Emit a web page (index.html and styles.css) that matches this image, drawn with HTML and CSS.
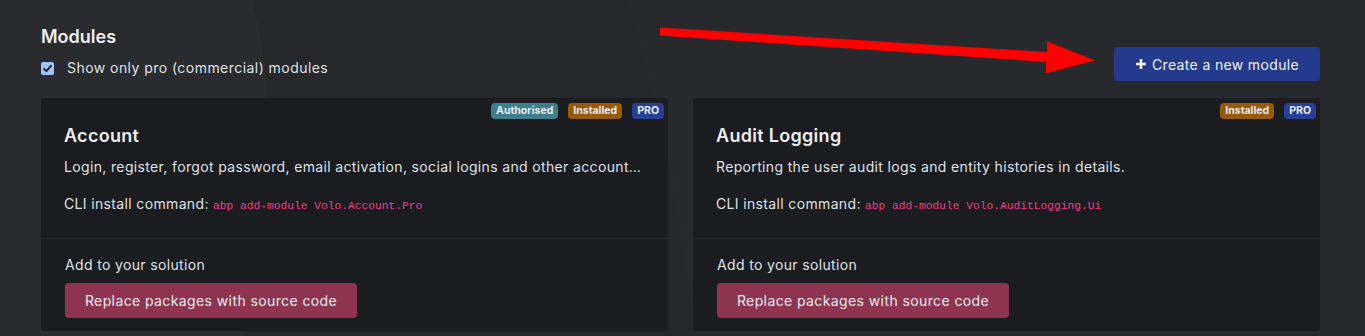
FILE: index.html
```html
<!DOCTYPE html>
<html lang="en">
<head>
<meta charset="utf-8">
<title>Modules</title>
<link rel="stylesheet" href="styles.css">
</head>
<body>
<div class="page">
  <div class="header">
    <div class="header-left">
      <h2 class="title">Modules</h2>
      <label class="check-row">
        <span class="checkbox"><svg width="13" height="13" viewBox="0 0 13 13"><path d="M3 6.8 L5.4 9.2 L10 3.8" fill="none" stroke="#1c1d20" stroke-width="1.8" stroke-linecap="round" stroke-linejoin="round"/></svg></span>
        <span>Show only pro (commercial) modules</span>
      </label>
    </div>
    <button class="btn-create"><svg width="12" height="12" viewBox="0 0 12 12"><path d="M6 1 V11 M1 6 H11" stroke="#f1f3f8" stroke-width="2.6"/></svg>Create a new module</button>
  </div>

  <div class="cards">
    <div class="card">
      <div class="badges">
        <span class="badge badge-auth">Authorised</span>
        <span class="badge badge-installed">Installed</span>
        <span class="badge badge-pro">PRO</span>
      </div>
      <div class="card-body">
        <h3 class="card-title">Account</h3>
        <p class="desc">Login, register, forgot password, email activation, social logins and other account related pages and functionalities.</p>
        <p class="cli">CLI install command: <code>abp add-module Volo.Account.Pro</code></p>
      </div>
      <div class="card-footer">
        <p class="add">Add to your solution</p>
        <button class="btn-replace">Replace packages with source code</button>
      </div>
    </div>

    <div class="card">
      <div class="badges">
        <span class="badge badge-installed">Installed</span>
        <span class="badge badge-pro">PRO</span>
      </div>
      <div class="card-body">
        <h3 class="card-title">Audit Logging</h3>
        <p class="desc">Reporting the user audit logs and entity histories in details.</p>
        <p class="cli">CLI install command: <code>abp add-module Volo.AuditLogging.Ui</code></p>
      </div>
      <div class="card-footer">
        <p class="add">Add to your solution</p>
        <button class="btn-replace">Replace packages with source code</button>
      </div>
    </div>
  </div>
</div>

<svg class="arrow" width="1365" height="336" viewBox="0 0 1365 336">
  <polygon points="660,27.5 1047,52 1047,41.3 1095,60.5 1046,73.3 1046,62 660,35.5" fill="#ff0000"/>
</svg>
</body>
</html>
```

FILE: styles.css
```css
* { box-sizing: border-box; }

html, body {
  margin: 0;
  padding: 0;
}

body {
  width: 1365px;
  height: 336px;
  overflow: hidden;
  position: relative;
  font-family: Inter, "Open Sans", "Noto Sans", sans-serif;
  font-size: 14px;
  letter-spacing: 0.35px;
  color: #dfe2e6;
  background:
    radial-gradient(circle 670px at -400px 150px, #2a2b2e 669px, transparent 670px),
    radial-gradient(circle 1702px at -1000px 490px, #25272a 1701px, transparent 1702px),
    #28292c;
}

.page {
  padding: 25px 45px 0 41px;
}

.header {
  display: flex;
  justify-content: space-between;
  align-items: flex-start;
}

.title {
  margin: 0;
  font-size: 18px;
  line-height: 24px;
  font-weight: 600;
  letter-spacing: 0;
  color: #eceef1;
}

.check-row {
  margin-top: 8px;
  display: flex;
  align-items: center;
  gap: 13px;
  line-height: 22px;
  font-size: 14px;
  letter-spacing: 0.45px;
  color: #dfe2e6;
}

.checkbox {
  width: 13px;
  height: 13px;
  border-radius: 2px;
  background: #9fc5f8;
  display: flex;
}

.btn-create {
  margin-top: 22px;
  margin-bottom: -2px;
  height: 34px;
  width: 206px;
  border: 0;
  border-radius: 4px;
  background: #243b8d;
  color: #eef0f6;
  font-family: inherit;
  font-size: 14px;
  letter-spacing: 0.35px;
  display: flex;
  align-items: center;
  justify-content: center;
  gap: 5px;
  padding: 0;
}

.cards {
  margin-top: 19px;
  display: grid;
  grid-template-columns: 627px 627px;
  gap: 25px;
}

.card {
  position: relative;
  background: #1b1c1f;
  border-radius: 3px;
  height: 233px;
}

.badges {
  position: absolute;
  top: 5px;
  right: 4px;
  display: flex;
  gap: 10px;
}

.badge {
  height: 16px;
  line-height: 16px;
  padding: 0 5px;
  border-radius: 4px;
  font-size: 10.5px;
  font-weight: 700;
  letter-spacing: 0;
  color: #e8ecef;
}

.badge-auth { background: #3d7f8c; }
.badge-installed { background: #975a06; }
.badge-pro { background: #273f98; }

.card-body {
  padding: 26px 24px 21px 23px;
  border-bottom: 1px solid #232528;
}

.card-title {
  margin: 0;
  font-size: 18px;
  line-height: 24px;
  font-weight: 600;
  letter-spacing: 0.3px;
  color: #eceef1;
}

.desc {
  margin: 8px 0 0;
  line-height: 21px;
  white-space: nowrap;
  overflow: hidden;
  text-overflow: ellipsis;
}

.cli {
  margin: 16px 0 0;
  line-height: 21px;
}

code {
  font-family: "Liberation Mono", "DejaVu Sans Mono", monospace;
  font-size: 11.25px;
  letter-spacing: 0;
  color: #e8418a;
}

.card-footer {
  padding: 15px 24px 13px 24px;
}

.add {
  margin: 0;
  line-height: 21px;
}

.btn-replace {
  margin-top: 8px;
  height: 35px;
  width: 292px;
  border: 0;
  border-radius: 4px;
  background: #8e3451;
  color: #eaeaee;
  font-family: inherit;
  font-size: 14px;
  letter-spacing: 0.4px;
  padding: 0;
}

.arrow {
  position: absolute;
  top: 0;
  left: 0;
  pointer-events: none;
}
```
